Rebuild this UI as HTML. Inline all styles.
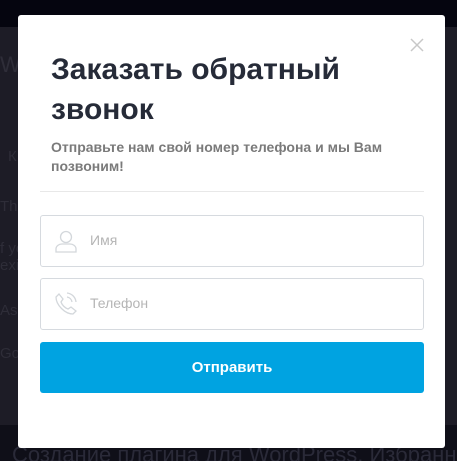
<!DOCTYPE html>
<html><head><meta charset="utf-8"><style>
html{overflow:hidden}
body{margin:0;width:457px;height:461px;overflow:hidden;background:#1d1c26;font-family:"Liberation Sans",Arial,sans-serif;position:relative}
.top{position:absolute;left:0;top:0;width:457px;height:27px;background:#05050f}
.bot{position:absolute;left:0;top:425px;width:457px;height:36px;overflow:hidden;background:#0f0f18;color:#2a2a38;font-size:22px;white-space:nowrap;padding-left:12px;line-height:60px;box-sizing:border-box}
.bg{position:absolute;color:#2e2d38;font-size:15px}
.modal{position:absolute;left:18px;top:15px;width:427px;height:433px;background:#fff;border-radius:3px}
.x{position:absolute;left:391px;top:22px;width:16px;height:16px}
h1{position:absolute;left:33px;top:35px;margin:0;font-size:30px;line-height:40px;color:#262b38;font-weight:bold;width:330px}
.sub{position:absolute;left:33px;top:123px;font-size:14px;font-weight:bold;color:#7a7a7a;line-height:19px;width:360px}
.hr{position:absolute;left:22px;top:176px;width:384px;height:1px;background:#e8e8e8}
.in{position:absolute;left:22px;width:382px;height:50px;border:1px solid #d6dadf;border-radius:3px}
.in span{position:absolute;left:49px;top:16px;font-size:14px;color:#b5b5b5}
.in svg{position:absolute;left:13px;top:13px}
.btn{position:absolute;left:22px;top:327px;width:384px;height:51px;background:#00a3e1;border-radius:3px;color:#fff;font-weight:bold;font-size:15px;text-align:center;line-height:51px}
</style></head><body>
<div class="top"></div>
<div class="bg" style="left:0;top:52px;font-size:22px">W</div>
<div class="bg" style="left:8px;top:148px">К</div>
<div class="bg" style="left:0;top:198px">Thi</div>
<div class="bg" style="left:0;top:240px">f yo<br>exis</div>
<div class="bg" style="left:0;top:302px">As y</div>
<div class="bg" style="left:0;top:345px">Go</div>
<div class="bot">Создание плагина для WordPress. Избранные</div>
<div class="modal">
<svg class="x" viewBox="0 0 16 16"><path d="M2 2L14 14M14 2L2 14" stroke="#c8c8c8" stroke-width="1.5"/></svg>
<h1>Заказать обратный звонок</h1>
<div class="sub">Отправьте нам свой номер телефона и мы Вам позвоним!</div>
<div class="hr"></div>
<div class="in" style="top:200px"><svg width="24" height="24" viewBox="0 0 24 24" fill="none" stroke="#d3d7db" stroke-width="1.3"><circle cx="12" cy="8" r="5.5"/><path d="M2 23v-3c0-3 3-5 6-5h8c3 0 6 2 6 5v3z"/></svg><span>Имя</span></div>
<div class="in" style="top:263px"><svg width="24" height="24" viewBox="0 0 24 24" fill="none" stroke="#d3d7db" stroke-width="1.3"><path d="M5 2l4 5-2 3c1 3 4 6 7 7l3-2 5 4-3 3C11 22 2 13 2 5z"/><path d="M13 5a6 6 0 0 1 5 5M13 1a10 10 0 0 1 9 9"/></svg><span>Телефон</span></div>
<div class="btn">Отправить</div>
</div>
</body></html>
